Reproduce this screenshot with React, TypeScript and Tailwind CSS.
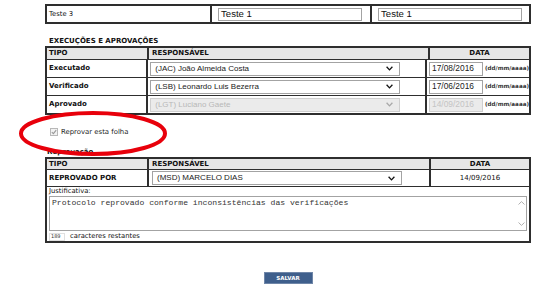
import React from "react";

const tah = "font-['DejaVu_Sans',sans-serif]";
const ari = "font-['Liberation_Sans',Arial,sans-serif]";

type SelProps = { value: string; disabled?: boolean };

const FakeSelect = ({ value, disabled }: SelProps) => (
  <div
    className={`ml-[2px] flex h-[14px] w-[250px] items-center justify-between border pl-[4px] pr-[6px] text-[8px] ${ari} ${
      disabled ? "border-[#cfcfcf] bg-[#ebebeb] text-[#b8b8b8]" : "border-[#a3a3a3] bg-white text-[#222]"
    }`}
  >
    <span>{value}</span>
    <svg width="7" height="5" viewBox="0 0 7 5">
      <path d="M0.6 0.8 L3.5 3.9 L6.4 0.8" stroke={disabled ? "#a8a8a8" : "#111"} strokeWidth="1.3" fill="none" />
    </svg>
  </div>
);

const DateField = ({ value, disabled }: SelProps) => (
  <div className="flex items-center gap-[2px] pl-[2px]">
    <div
      className={`flex h-[14px] w-[54px] items-center border pl-[2px] text-[8.4px] ${ari} ${
        disabled ? "border-[#cfcfcf] bg-[#ebebeb] text-[#c4c4c4]" : "border-[#a3a3a3] bg-white text-[#222]"
      }`}
    >
      {value}
    </div>
    <span className={`text-[5.6px] font-bold text-[#333] ${tah}`}>(dd/mm/aaaa)</span>
  </div>
);

const App = () => {
  const rows = [
    { tipo: "Executado", resp: "(JAC) João Almeida Costa", data: "17/08/2016" },
    { tipo: "Verificado", resp: "(LSB) Leonardo Luis Bezerra", data: "17/06/2016" },
    { tipo: "Aprovado", resp: "(LGT) Luciano Gaete", data: "14/09/2016", disabled: true },
  ];

  return (
    <div className="relative h-[301px] w-[542px] overflow-hidden bg-white text-[#111]">
      <div className="ml-[45px] w-[486px] pt-[4px]">
        {/* linha de identificação */}
        <div className="flex h-[20px] border-2 border-[#2e2e2e]">
          <div className={`flex w-[163px] items-center pl-[2px] text-[6.8px] ${tah}`}>Teste 3</div>
          <div className="flex w-[160px] items-center border-l-2 border-[#2e2e2e] pl-[6px]">
            <div className={`flex h-[13px] w-[144px] items-center border border-[#a3a3a3] pl-[2px] text-[9.6px] ${ari}`}>Teste 1</div>
          </div>
          <div className="flex flex-1 items-center border-l-2 border-[#2e2e2e] pl-[6px]">
            <div className={`flex h-[13px] w-[144px] items-center border border-[#a3a3a3] pl-[2px] text-[9.6px] ${ari}`}>Teste 1</div>
          </div>
        </div>

        <div className={`mt-[12px] h-[10px] pl-[4px] text-[7px] leading-[10px] font-bold ${tah}`}>EXECUÇÕES E APROVAÇÕES</div>

        {/* execuções e aprovações */}
        <div className="border-2 border-[#2e2e2e]">
          <div className={`flex h-[11px] bg-[#e6e6e6] text-[7px] font-bold ${tah}`}>
            <div className="flex w-[100px] items-center pl-[2px]">TIPO</div>
            <div className="flex w-[281px] items-center border-l-2 border-[#2e2e2e] pl-[3px]">RESPONSÁVEL</div>
            <div className="flex flex-1 items-center justify-center border-l-2 border-[#2e2e2e]">DATA</div>
          </div>
          {rows.map((r) => (
            <div key={r.tipo} className="flex h-[18px] border-t border-[#2e2e2e]">
              <div className={`flex w-[100px] items-center pl-[2px] text-[7px] font-bold ${tah}`}>{r.tipo}</div>
              <div className="flex w-[281px] items-center border-l-2 border-[#2e2e2e]">
                <FakeSelect value={r.resp} disabled={r.disabled} />
              </div>
              <div className="flex flex-1 items-center border-l-2 border-[#2e2e2e]">
                <DateField value={r.data} disabled={r.disabled} />
              </div>
            </div>
          ))}
        </div>

        <div className={`mt-[12px] flex h-[10px] items-center gap-[3px] pl-[5px] text-[6.9px] ${tah}`}>
          <span className="flex h-[8px] w-[8px] items-center justify-center border border-[#b8b8b8] bg-[#f2f2f2]">
            <svg width="6" height="6" viewBox="0 0 6 6">
              <path d="M0.8 3.2 L2.4 4.7 L5.2 1.2" stroke="#9a9a9a" strokeWidth="1.1" fill="none" />
            </svg>
          </span>
          <span className="text-[#222]">Reprovar esta folha</span>
        </div>

        <div className={`mt-[10px] h-[10px] pl-[2px] text-[7px] leading-[10px] font-bold ${tah}`}>Reprovação</div>

        {/* reprovação */}
        <div className="border-2 border-[#2e2e2e]">
          <div className={`flex h-[10px] bg-[#e6e6e6] text-[7px] font-bold ${tah}`}>
            <div className="flex w-[100px] items-center pl-[2px]">TIPO</div>
            <div className="flex w-[282px] items-center border-l-2 border-[#2e2e2e] pl-[3px]">RESPONSÁVEL</div>
            <div className="flex flex-1 items-center justify-center border-l-2 border-[#2e2e2e]">DATA</div>
          </div>
          <div className="flex h-[17px] border-t border-[#2e2e2e]">
            <div className={`flex w-[100px] items-center pl-[2px] text-[7px] font-bold ${tah}`}>REPROVADO POR</div>
            <div className="flex w-[282px] items-center border-l-2 border-[#2e2e2e] pl-[1px]">
              <FakeSelect value="(MSD) MARCELO DIAS" />
            </div>
            <div className={`flex flex-1 items-center justify-center border-l-2 border-[#2e2e2e] text-[7px] ${tah}`}>14/09/2016</div>
          </div>
          <div className="border-t border-[#2e2e2e] px-[2px]">
            <div className={`h-[9px] text-[6.8px] leading-[9px] ${tah}`}>Justificativa:</div>
            <div className="flex h-[35px] border border-[#a3a3a3]">
              <div className="flex-1 pl-[2px] pt-[1px] font-['Liberation_Mono',monospace] text-[8.1px] leading-[10px] text-[#333]">
                Protocolo reprovado conforme inconsistências das verificações
              </div>
              <div className="flex w-[10px] flex-col items-center justify-between py-[4px]">
                <svg width="7" height="4" viewBox="0 0 7 4">
                  <path d="M0.5 3.5 L3.5 0.6 L6.5 3.5" stroke="#b0b0b0" strokeWidth="1" fill="none" />
                </svg>
                <svg width="7" height="4" viewBox="0 0 7 4">
                  <path d="M0.5 0.5 L3.5 3.4 L6.5 0.5" stroke="#b0b0b0" strokeWidth="1" fill="none" />
                </svg>
              </div>
            </div>
            <div className={`mt-[1px] flex h-[9px] items-center gap-[5px] text-[6.8px] ${tah}`}>
              <span className="flex h-[8px] w-[16px] items-center border border-[#e0e0e0] pl-[1px] text-[5px] text-[#333]">189</span>
              <span>caracteres restantes</span>
            </div>
          </div>
        </div>

        <div className="mt-[29px] flex justify-center">
          <button className={`flex h-[12px] w-[49px] items-center justify-center border border-[#6f86a8] bg-[#3f5f8c] text-[5.5px] font-bold text-white ${tah}`}>
            SALVAR
          </button>
        </div>
      </div>

      {/* destaque vermelho */}
      <svg className="absolute left-[18px] top-[110px]" width="150" height="48" viewBox="0 0 150 48">
        <ellipse cx="75" cy="23.5" rx="72" ry="20.5" stroke="#e8000b" strokeWidth="4" fill="none" />
      </svg>
    </div>
  );
};

export default App;
